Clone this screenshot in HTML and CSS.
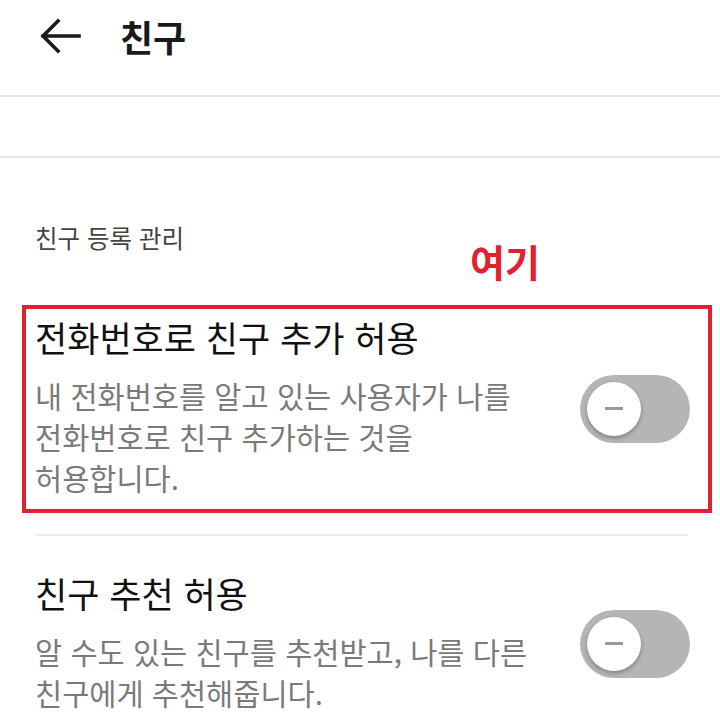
FILE: index.html
```html
<!DOCTYPE html>
<html lang="ko">
<head>
  <meta charset="UTF-8" />
  <meta name="viewport" content="width=device-width, initial-scale=1.0"/>
  <title>친구</title>
  <link rel="stylesheet" href="styles.css">
</head>
<body>
  <div class="topbar">
    <svg class="back" width="44" height="36" viewBox="0 0 44 36">
      <path d="M20 3 L5 18 L20 33 M5 18 H41" fill="none" stroke="#1a1a1a" stroke-width="3.6" stroke-linecap="square" stroke-linejoin="miter"/>
    </svg>
    <h1>친구</h1>
  </div>
  <div class="spacer"></div>

  <div class="section-label">친구 등록 관리</div>

  <div class="highlight">
    <span class="note">여기</span>
    <div class="setting">
      <div class="setting-text">
        <div class="setting-title">전화번호로 친구 추가 허용</div>
        <div class="setting-desc">내 전화번호를 알고 있는 사용자가 나를<br>전화번호로 친구 추가하는 것을<br>허용합니다.</div>
      </div>
      <div class="toggle"><span class="knob"></span></div>
    </div>
  </div>

  <div class="divider"></div>

  <div class="setting plain">
    <div class="setting-text">
      <div class="setting-title">친구 추천 허용</div>
      <div class="setting-desc">알 수도 있는 친구를 추천받고, 나를 다른<br>친구에게 추천해줍니다.</div>
    </div>
    <div class="toggle"><span class="knob"></span></div>
  </div>
</body>
</html>
```

FILE: styles.css
```css
body { margin: 0; background: #fff; font-family: "Noto Sans CJK KR", "Noto Sans", sans-serif; color: #111; overflow: hidden; }
.topbar { display: flex; align-items: center; padding-left: 38px; border-bottom: 2px solid #e6e6e6; box-sizing: border-box; height: 97px; }
.back { display: block; margin-top: -24px; }
.topbar h1 { margin: -24px 0 0 38px; font-size: 36px; font-weight: 700; color: #1a1a1a; }
.spacer { height: 59px; border-bottom: 2px solid #e6e6e6; }
.section-label { margin: 64px 0 0 35px; font-size: 24.5px; color: #444; line-height: 32px; }
.highlight { position: relative; margin: 51px 8px 0 22px; border: 4px solid #e3202e; height: 200px; }
.note { position: absolute; top: -70px; left: 444px; font-size: 38px; font-weight: 700; color: #e3202e; line-height: 44px; }
.setting { display: flex; align-items: center; justify-content: space-between; padding: 6px 18px 0 9px; }
.setting-title { font-size: 35px; line-height: 44px; color: #111; }
.setting-desc { margin-top: 16px; font-size: 29.5px; line-height: 41px; color: #7a7a7a; }
.toggle { position: relative; width: 110px; height: 68px; border-radius: 34px; background: #b5b5b5; flex-shrink: 0; margin-top: 4px; }
.knob { position: absolute; left: 7px; top: 7px; width: 54px; height: 54px; border-radius: 50%; background: #fff; box-shadow: 0 2px 4px rgba(0,0,0,0.3); }
.knob::after { content: ""; position: absolute; left: 18px; top: 25px; width: 18px; height: 3px; background: #9a9a9a; }
.divider { margin: 21px 32px 0 35px; border-top: 2px solid #eeeeee; }
.setting.plain { padding: 35px 30px 0 35px; }
```
